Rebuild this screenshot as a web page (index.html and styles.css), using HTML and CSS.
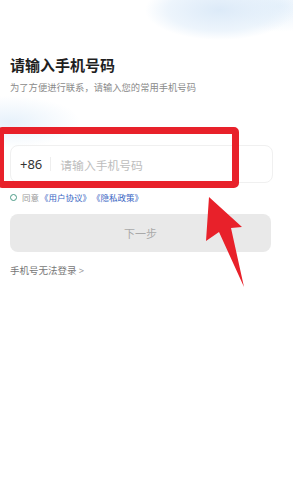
FILE: index.html
```html
<!DOCTYPE html>
<html lang="zh-CN">

<head>
    <meta charset="UTF-8">
    <meta name="viewport" content="width=device-width, initial-scale=1.0">
    <title>手机号登录</title>
    <link rel="stylesheet" href="styles.css">
</head>

<body>
    <div class="page">
        <!-- Header -->
        <h1 class="title">请输入手机号码</h1>
        <p class="subtitle">为了方便进行联系，请输入您的常用手机号码</p>

        <!-- Phone input -->
        <div class="phone-box">
            <span class="area-code">+86</span>
            <span class="divider"></span>
            <span class="placeholder">请输入手机号码</span>
        </div>

        <div class="agreement">
            <span class="radio"></span>
            <span class="agree">同意</span>
            <a class="link">《用户协议》</a>
            <a class="link">《隐私政策》</a>
        </div>

        <button class="next-btn">下一步</button>

        <div class="help">手机号无法登录 <span class="chevron">&gt;</span></div>
    </div>

    <!-- annotation overlay -->
    <div class="mark-box"></div>
    <svg class="mark-arrow" width="293" height="497" viewBox="0 0 293 497">
        <polygon points="209,197 242,227 231,228 244,287 219,232 206,241" fill="#e8212a" />
    </svg>
</body>

</html>
```

FILE: styles.css
```css
body {
    margin: 0;
    width: 293px;
    height: 497px;
    overflow: hidden;
    position: relative;
    font-family: "Noto Sans CJK SC", "Noto Sans", sans-serif;
    color: #222;
    background-color: #fff;
    background-image:
        radial-gradient(ellipse 75px 30px at 220px 10px, rgba(220, 234, 248, 1), rgba(225, 238, 250, 0.6) 70%, rgba(225, 238, 250, 0) 100%),
        radial-gradient(ellipse 50px 26px at 280px 6px, rgba(228, 240, 251, 0.9), rgba(228, 240, 251, 0) 100%),
        radial-gradient(ellipse 70px 26px at 10px 122px, rgba(225, 238, 250, 0.8), rgba(225, 238, 250, 0) 100%);
}

.page {
    padding: 54px 10px 0 10px;
}

.title {
    margin: 0;
    font-size: 15px;
    line-height: 22px;
    font-weight: bold;
    color: #1f1f1f;
}

.subtitle {
    margin: 4px 0 0 0;
    font-size: 9.3px;
    line-height: 14px;
    color: #8a8a8a;
}

.phone-box {
    margin-top: 51px;
    height: 36px;
    width: 252px;
    border: 1px solid #f0f0f0;
    border-radius: 8px;
    display: flex;
    align-items: center;
    padding-left: 9px;
}

.area-code {
    font-size: 13px;
    color: #333;
    font-family: "Noto Sans", sans-serif;
}

.divider {
    width: 1px;
    height: 14px;
    background-color: #eee;
    margin: 0 9px 0 8px;
}

.placeholder {
    font-size: 11.8px;
    color: #bdbdbd;
}

.agreement {
    margin-top: 8px;
    display: flex;
    align-items: center;
    font-size: 8.5px;
    line-height: 12px;
}

.radio {
    width: 5px;
    height: 5px;
    border: 1px solid #4a9a86;
    border-radius: 50%;
    margin-right: 5px;
}

.agree {
    color: #999;
}

.link {
    color: #3a66c4;
    margin-left: 1px;
}

.next-btn {
    display: block;
    margin-top: 11px;
    width: 261px;
    height: 38px;
    border: none;
    border-radius: 8px;
    background-color: #e9e9e9;
    color: #a9a9a9;
    font-family: "Noto Sans CJK SC", sans-serif;
    font-size: 11px;
}

.help {
    margin-top: 11px;
    font-size: 9.5px;
    line-height: 14px;
    color: #777;
}

.chevron {
    color: #999;
    font-family: "Noto Sans", sans-serif;
}

.mark-box {
    position: absolute;
    left: -3px;
    top: 127px;
    width: 228px;
    height: 47px;
    border: 7px solid #e8212a;
    border-radius: 5px;
}

.mark-arrow {
    position: absolute;
    left: 0;
    top: 0;
}
```
